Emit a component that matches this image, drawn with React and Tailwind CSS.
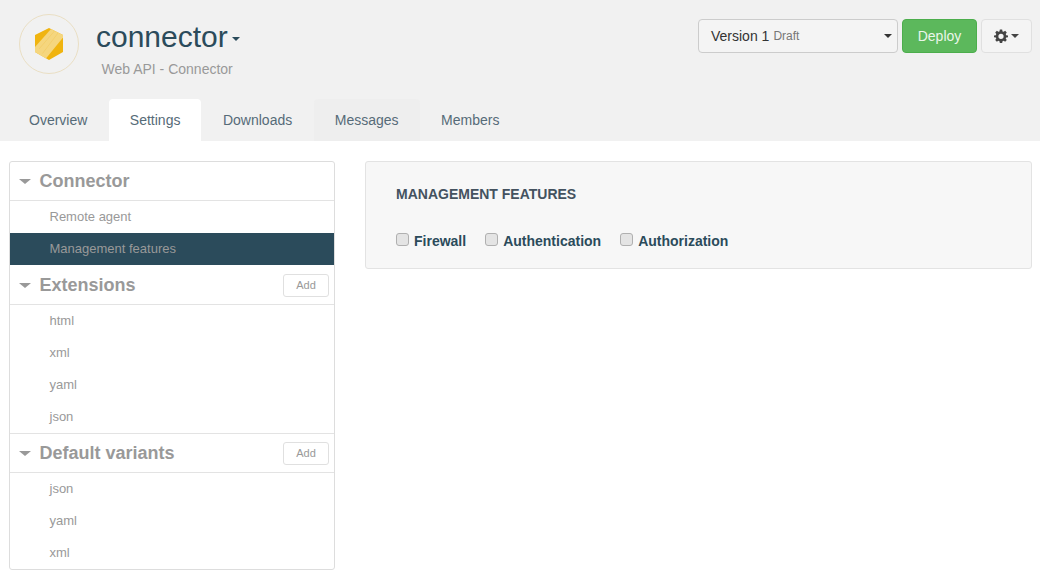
import React from "react";

function Caret({ className = "" }) {
  return <span className={"inline-block w-0 h-0 border-x-4 border-x-transparent border-t-4 " + className} />;
}

function Gear() {
  return (
    <svg width="14" height="14" viewBox="0 0 24 24" className="text-[#444]">
      <path fill="currentColor" fillRule="evenodd" d="M10 1h4l.6 3.1 1.900.8L19.100 3.100 21.900 6l-1.800 2.600.8 1.900L24 11v3l-3.100.5-.8 1.900 1.800 2.600-2.800 2.900-2.600-1.800-1.900.8L14 24h-4l-.6-3.100-1.900-.8-2.600 1.800L2.100 19l1.800-2.600-.8-1.900L0 14v-3l3.100-.5.8-1.900L2.100 6 4.900 3.100 7.500 4.900 9.400 4.100zM12 8a4.500 4.500 0 1 0 0 9 4.500 4.500 0 0 0 0-9z" />
    </svg>
  );
}

function Logo() {
  return (
    <div className="w-[60px] h-[60px] rounded-full border border-[#eadfc4] flex items-center justify-center">
      <svg width="28" height="32" viewBox="0 0 28 32">
        <path d="M14 0 L28 7 V24 L14 32 L0 24 V7 Z" fill="#f0b40f" />
        <path d="M16 1 L28 7 V9.500 L11 30.500 L0 24 V19 Z" fill="#f5d67e" />
        <path d="M19.500 3 L4 21 M23 5 L7.500 25.500" stroke="#f1c95f" strokeWidth="0.600" fill="none" />
      </svg>
    </div>
  );
}

function Tab({ label, active, hover }) {
  return (
    <div
      className={
        "h-[42px] flex items-center justify-center rounded-t text-[14px] text-[#566b78] px-[21px] " +
        (active ? "bg-white text-[#4a5b66]" : hover ? "bg-[#eeeeee]" : "")
      }
    >
      {label}
    </div>
  );
}

function SectionHead({ title, add, spaced }) {
  return (
    <div className={"flex items-center border-b border-[#e3e3e3] " + (spaced ? "h-10 pt-px" : "h-[39px]")}>
      <Caret className="border-t-[5px] border-x-[6px] border-t-[#999] ml-[9px] w-0" />
      <span className="ml-[8.500px] font-bold text-[18px] text-[#999] grow">{title}</span>
      {add && (
        <button className="w-[46px] h-[23px] mr-[5px] border border-[#e0e0e0] rounded-[3px] bg-white text-[11px] text-[#999] flex items-center justify-center">
          Add
        </button>
      )}
    </div>
  );
}

function Item({ label, active }) {
  return (
    <div
      className={
        "h-8 flex items-center pl-[39.500px] text-[13px] text-[#999] " + (active ? "bg-[#2b4b5b]" : "")
      }
    >
      {label}
    </div>
  );
}

function Check({ label }) {
  return (
    <label className="flex items-center">
      <span className="w-[13px] h-[13px] mt-[-4px] rounded-[3px] border border-[#b0b0b0] bg-[#e4e4e4] mr-[5px]" />
      <span className="font-bold text-[14px] text-[#2b4b5b]">{label}</span>
    </label>
  );
}

export default function App() {
  return (
    <div className="w-[1040px] h-[581px] bg-white overflow-hidden font-['Liberation_Sans',Arial,sans-serif]">
      <header className="h-[141px] bg-[#f1f1f1] flex flex-col">
        <div className="flex h-[99px]">
          <div className="ml-[19px] mt-[14px]">
            <Logo />
          </div>
          <div className="ml-[17px] mt-[17px]">
            <div className="flex items-center h-[40px]">
              <span className="text-[30px] leading-[40px] text-[#2b4b5b]">connector</span>
              <Caret className="ml-[4px] mt-[4px] border-t-[#2b4b5b]" />
            </div>
            <div className="ml-[5.500px] mt-[2px] text-[14px] leading-5 text-[#999]">Web API - Connector</div>
          </div>
          <div className="ml-auto mr-2 mt-[19px] flex items-start">
            <div className="w-[200px] h-[34px] border border-[#ccc] rounded bg-[#f4f4f4] flex items-center pl-3 pr-[5px]">
              <span className="text-[14px] text-[#333]">Version 1</span>
              <span className="text-[12px] text-[#777] ml-[4px]">Draft</span>
              <Caret className="ml-auto border-t-[#333]" />
            </div>
            <button className="ml-1 w-[75px] h-[34px] rounded bg-[#5cb85c] border border-[#4cae4c] text-[14px] text-[#eaf6ea] flex items-center justify-center">
              Deploy
            </button>
            <button className="ml-1 w-[51px] h-[34px] rounded border border-[#e0e0e0] bg-[#f4f4f4] flex items-center justify-center">
              <Gear />
              <Caret className="ml-[3px] border-t-[#444]" />
            </button>
          </div>
        </div>
        <nav className="flex pl-2 gap-[0.500px]">
          <Tab label="Overview" />
          <Tab label="Settings" active />
          <Tab label="Downloads" />
          <Tab label="Messages" hover />
          <Tab label="Members" />
        </nav>
      </header>
      <main className="flex items-start pt-5 pl-[9px] pr-2">
        <aside className="w-[326px] border border-[#ddd] rounded-[3px] bg-white shrink-0">
          <SectionHead title="Connector" />
          <Item label="Remote agent" />
          <Item label="Management features" active />
          <SectionHead title="Extensions" add spaced />
          {["html", "xml", "yaml", "json"].map((x) => (
            <Item key={x} label={x} />
          ))}
          <div className="border-t border-[#e3e3e3]" />
          <SectionHead title="Default variants" add />
          {["json", "yaml", "xml"].map((x) => (
            <Item key={x} label={x} />
          ))}
        </aside>
        <section className="ml-[30px] grow h-[108px] border border-[#e3e3e3] rounded-[3px] bg-[#f7f7f7] pl-[30px]">
          <h2 className="mt-6 text-[14px] leading-4 font-bold text-[#44525f] uppercase">Management features</h2>
          <div className="flex gap-[19px] mt-[29px]">
            <Check label="Firewall" />
            <Check label="Authentication" />
            <Check label="Authorization" />
          </div>
        </section>
      </main>
    </div>
  );
}
